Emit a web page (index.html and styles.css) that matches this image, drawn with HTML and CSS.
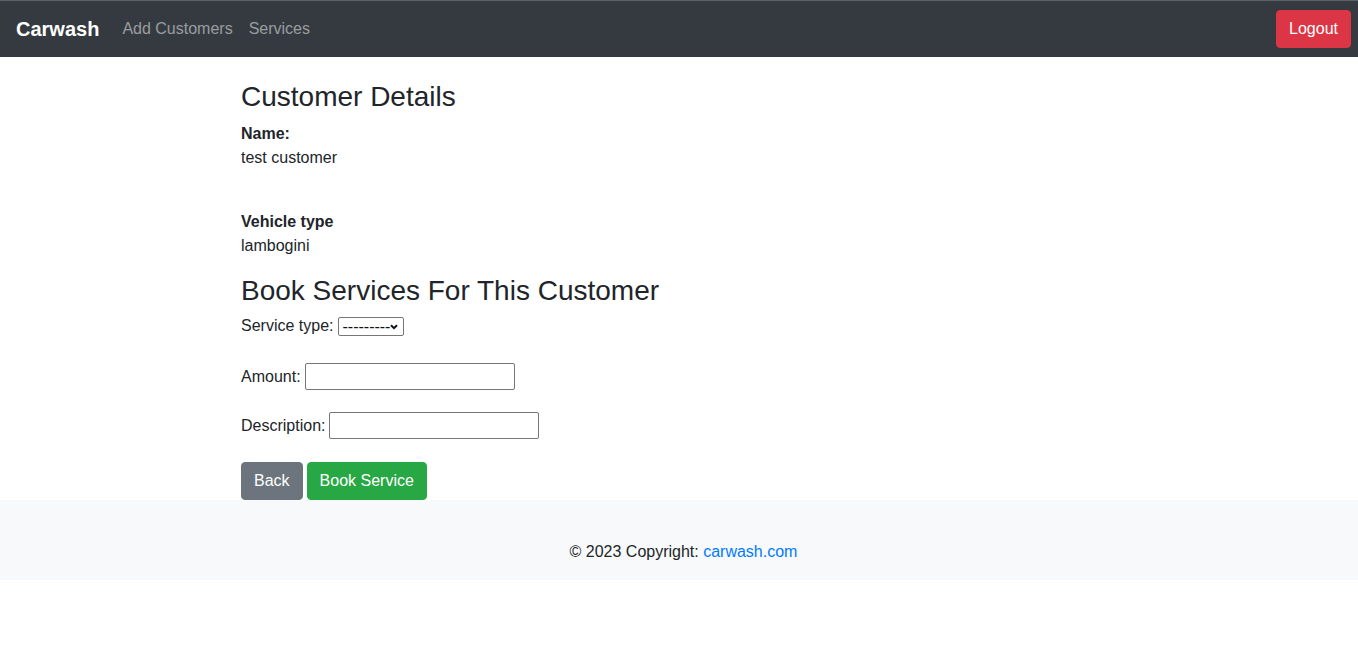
FILE: index.html
```html
<!DOCTYPE html>
<html lang="en">
<head>
<meta charset="utf-8">
<title>Carwash</title>
<link rel="stylesheet" href="styles.css">
</head>
<body>
<nav class="navbar">
  <a class="brand" href="#">Carwash</a>
  <ul class="nav-links">
    <li><a href="#">Add Customers</a></li>
    <li><a href="#">Services</a></li>
  </ul>
  <a class="btn btn-danger logout" href="#">Logout</a>
</nav>
<main class="container">
  <h3>Customer Details</h3>
  <p class="label">Name:</p>
  <p class="value">test customer</p>
  <p class="label">Vehicle type</p>
  <p class="value last">lambogini</p>
  <h3>Book Services For This Customer</h3>
  <form class="form">
    <div class="field field-select">
      <label for="st">Service type:</label>
      <span class="select-wrap">
        <select id="st" class="select"><option>---------</option></select>
        <svg class="chevron" width="8" height="6" viewBox="0 0 8 6" aria-hidden="true"><path d="M1 1.2 L4 4.2 L7 1.2" fill="none" stroke="#111" stroke-width="2"/></svg>
      </span>
    </div>
    <div class="field field-amount">
      <label for="amt">Amount:</label>
      <input id="amt" class="input" type="text">
    </div>
    <div class="field field-desc">
      <label for="desc">Description:</label>
      <input id="desc" class="input" type="text">
    </div>
    <div class="actions">
      <a class="btn btn-secondary" href="#">Back</a>
      <button class="btn btn-success" type="button">Book Service</button>
    </div>
  </form>
</main>
<footer class="footer">
  <p>© 2023 Copyright: <a href="#">carwash.com</a></p>
</footer>
</body>
</html>
```

FILE: styles.css
```css
* { box-sizing: border-box; }
html, body { margin: 0; padding: 0; }
body {
  font-family: "Liberation Sans", Arial, sans-serif;
  font-size: 16px;
  line-height: 1.5;
  color: #212529;
  background: #fff;
}
a { text-decoration: none; }

.navbar {
  display: flex;
  align-items: center;
  background: #343a40;
  border-top: 1px solid #5b6066;
  height: 57px;
  padding: 0 7px 0 16px;
}
.brand {
  color: #fff;
  font-size: 20px;
  font-weight: bold;
  line-height: 30px;
  margin-right: 15px;
}
.nav-links {
  display: flex;
  list-style: none;
  margin: 0;
  padding: 0;
  flex: 1;
}
.nav-links a {
  display: block;
  padding: 8px 8px;
  color: rgba(255, 255, 255, 0.5);
}

.btn {
  display: inline-block;
  font-family: inherit;
  font-size: 16px;
  line-height: 24px;
  padding: 6px 12px;
  border: 1px solid transparent;
  border-radius: 4px;
  color: #fff;
  cursor: pointer;
}
.btn-danger { background: #dc3545; border-color: #dc3545; }
.btn-secondary { background: #6c757d; border-color: #6c757d; }
.btn-success { background: #28a745; border-color: #28a745; }

.container {
  width: 876px;
  margin: 0 auto;
  padding-top: 23px;
}
h3 {
  font-size: 28px;
  font-weight: 500;
  line-height: 1.2;
  margin: 0 0 8px;
}
.container p { margin: 0; }
.label { font-weight: bold; }
.value { margin-bottom: 40px !important; }
.value.last { margin-bottom: 16px !important; }

.form { padding-top: 1px; }
.field {
  display: flex;
  align-items: center;
  gap: 4px;
  height: 27px;
}
.field-select { height: 20px; margin-bottom: 27px; }
.field-amount { margin-bottom: 22px; }
.field-desc { margin-bottom: 23px; }
.select-wrap {
  position: relative;
  display: inline-block;
  height: 19px;
  margin-left: 1px;
}
.select {
  -webkit-appearance: none;
  appearance: none;
  display: block;
  font-family: "Liberation Sans", Arial, sans-serif;
  font-size: 16px;
  line-height: 17px;
  height: 19px;
  width: 66px;
  padding: 0 0 0 3px;
  border: 1px solid #767676;
  border-radius: 2px;
  background: #fff;
  color: #111;
}
.chevron {
  position: absolute;
  right: 6px;
  top: 7px;
  pointer-events: none;
}
.input {
  width: 210px;
  height: 27px;
  border: 1px solid #767676;
  border-radius: 2px;
  padding: 1px 2px;
  font-family: inherit;
  font-size: 16px;
}
.actions {
  display: flex;
  gap: 4px;
}

.footer {
  background: #f8f9fa;
  text-align: center;
  padding: 40px 0 16px 9px;
}
.footer p { margin: 0; }
.footer a { color: #007bff; }
```
